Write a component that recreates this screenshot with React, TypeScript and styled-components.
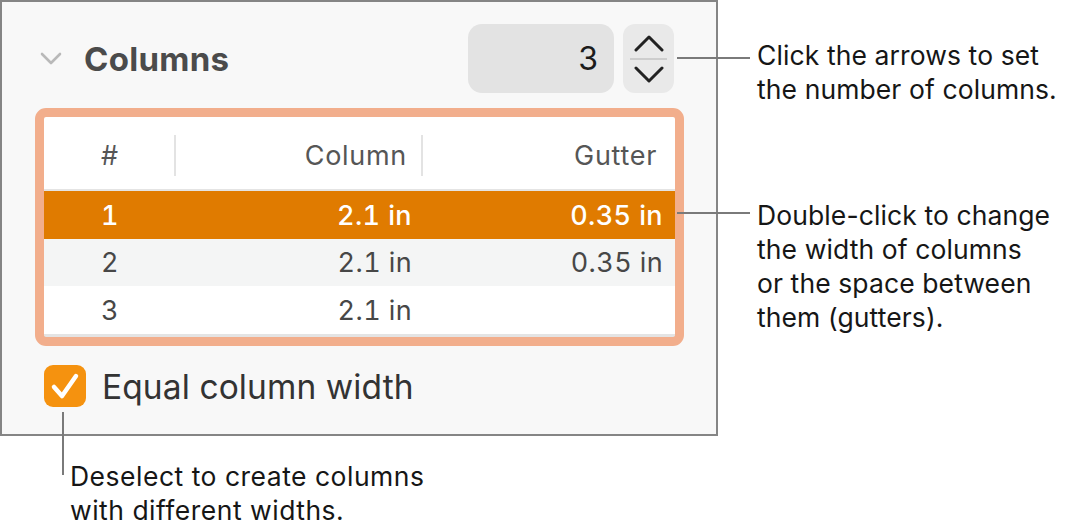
import React from "react";
import styled, { createGlobalStyle } from "styled-components";

const Global = createGlobalStyle`
  html, body { margin: 0; padding: 0; background: #ffffff; }
  body { font-family: "Inter", "Liberation Sans", sans-serif; -webkit-font-smoothing: antialiased; }
`;

const Page = styled.div`
  position: relative;
  width: 1077px;
  height: 529px;
  display: grid;
  grid-template-columns: 718px 1fr;
  grid-template-rows: 436px 1fr;
  background: #ffffff;
  overflow: hidden;
`;

const Panel = styled.section`
  box-sizing: border-box;
  width: 718px;
  height: 436px;
  border: 2px solid #858585;
  background: #f8f8f8;
  padding: 22px 32px 0 33px;
  display: flex;
  flex-direction: column;
`;

const HeaderRow = styled.div`
  display: flex;
  align-items: center;
  height: 69px;
`;

const Disclosure = styled.svg`
  width: 22px;
  height: 13px;
  margin-left: 5px;
  margin-right: 22px;
  flex: none;
`;

const Title = styled.h2`
  margin: 0;
  font-size: 33px;
  font-weight: 700;
  color: #4b4b4b;
  letter-spacing: 0.3px;
  flex: 1;
`;

const NumberField = styled.div`
  box-sizing: border-box;
  width: 146px;
  height: 69px;
  border-radius: 14px;
  background: #e3e3e3;
  display: flex;
  align-items: center;
  justify-content: flex-end;
  padding-right: 16px;
  font-size: 32px;
  color: #1c1c1c;
`;

const Stepper = styled.div`
  width: 51px;
  height: 69px;
  margin-left: 9px;
  margin-right: 10px;
  border-radius: 12px;
  background: #e9e9e9;
  display: flex;
  flex-direction: column;
  align-items: center;
  justify-content: center;
`;

const StepArrow = styled.svg`
  width: 30px;
  height: 18px;
  display: block;
`;

const StepDivider = styled.div`
  width: 37px;
  height: 2px;
  background: #cdcdcd;
  margin: 6px 0;
`;

const Frame = styled.div`
  margin-top: 15px;
  width: 649px;
  box-sizing: border-box;
  border: 9px solid #f2ae8c;
  border-radius: 11px;
  background: #f2ae8c;
`;

const Table = styled.div`
  background: #ffffff;
  border-bottom: 3px solid #e4e4e4;
  border-radius: 2px;
  display: grid;
  grid-template-columns: 132px 247px 1fr;
  font-variant-numeric: tabular-nums;
`;

const HeadCell = styled.div<{ $align: "center" | "right"; $pad: number; $sep?: boolean }>`
  position: relative;
  height: 74px;
  box-sizing: border-box;
  border-bottom: 2px solid #e4e4e4;
  display: flex;
  align-items: center;
  justify-content: ${(p) => (p.$align === "center" ? "center" : "flex-end")};
  padding-right: ${(p) => p.$pad}px;
  padding-top: 4px;
  font-size: 27px;
  letter-spacing: 0.7px;
  color: #565656;
  ${(p) =>
    p.$sep
      ? `&::after { content: ""; position: absolute; right: 0; top: 18px; height: 41px; width: 2px; background: #e3e3e3; }`
      : ""}
`;

const Cell = styled.div<{ $align: "center" | "right"; $pad: number; $tone: "sel" | "alt" | "plain" }>`
  height: ${(p) => (p.$tone === "alt" ? 47 : 48)}px;
  display: flex;
  align-items: center;
  justify-content: ${(p) => (p.$align === "center" ? "center" : "flex-end")};
  padding-right: ${(p) => p.$pad}px;
  font-size: 27px;
  letter-spacing: 0.4px;
  font-weight: ${(p) => (p.$tone === "sel" ? 500 : 400)};
  color: ${(p) => (p.$tone === "sel" ? "#ffffff" : "#474747")};
  background: ${(p) =>
    p.$tone === "sel" ? "#e07b00" : p.$tone === "alt" ? "#f4f5f5" : "#ffffff"};
`;

const CheckRow = styled.label`
  display: flex;
  align-items: center;
  margin-top: 19px;
  margin-left: 9px;
  gap: 16px;
`;

const CheckBox = styled.span`
  width: 42px;
  height: 42px;
  border-radius: 9px;
  background: #f5920f;
  display: flex;
  align-items: center;
  justify-content: center;
  flex: none;
`;

const CheckLabel = styled.span`
  font-size: 33.5px;
  color: #333333;
  letter-spacing: 0.1px;
  padding-top: 2px;
`;

const Notes = styled.div`
  padding-left: 39px;
  padding-top: 38px;
  display: flex;
  flex-direction: column;
  gap: 92px;
`;

const Note = styled.p`
  margin: 0;
  font-size: 26.5px;
  line-height: 34px;
  color: #161616;
  letter-spacing: 0.1px;
`;

const BottomNote = styled(Note)`
  grid-column: 1 / 3;
  margin-top: 23px;
  margin-left: 70px;
  letter-spacing: 0.5px;
`;

const Leader = styled.div<{ $x: number; $y: number; $w: number; $h: number }>`
  position: absolute;
  left: ${(p) => p.$x}px;
  top: ${(p) => p.$y}px;
  width: ${(p) => p.$w}px;
  height: ${(p) => p.$h}px;
  background: #7a7a7a;
`;

type Row = { n: string; col: string; gut: string; tone: "sel" | "alt" | "plain" };
const rows: Row[] = [
  { n: "1", col: "2.1 in", gut: "0.35 in", tone: "sel" },
  { n: "2", col: "2.1 in", gut: "0.35 in", tone: "alt" },
  { n: "3", col: "2.1 in", gut: "", tone: "plain" },
];

export default function App() {
  return (
    <Page>
      <Global />
      <Panel>
        <HeaderRow>
          <Disclosure viewBox="0 0 22 13">
            <path d="M2 2 L11 11 L20 2" fill="none" stroke="#b9b9b9" strokeWidth="2.6" strokeLinecap="round" strokeLinejoin="round" />
          </Disclosure>
          <Title>Columns</Title>
          <NumberField>3</NumberField>
          <Stepper>
            <StepArrow viewBox="0 0 30 18">
              <path d="M2 16 L15 3 L28 16" fill="none" stroke="#222" strokeWidth="3" strokeLinecap="round" strokeLinejoin="round" />
            </StepArrow>
            <StepDivider />
            <StepArrow viewBox="0 0 30 18">
              <path d="M2 2 L15 15 L28 2" fill="none" stroke="#222" strokeWidth="3" strokeLinecap="round" strokeLinejoin="round" />
            </StepArrow>
          </Stepper>
        </HeaderRow>
        <Frame>
          <Table>
            <HeadCell $align="center" $pad={0} $sep>#</HeadCell>
            <HeadCell $align="right" $pad={16} $sep>Column</HeadCell>
            <HeadCell $align="right" $pad={18}>Gutter</HeadCell>
            {rows.map((r) => (
              <React.Fragment key={r.n}>
                <Cell $align="center" $pad={0} $tone={r.tone}>{r.n}</Cell>
                <Cell $align="right" $pad={11} $tone={r.tone}>{r.col}</Cell>
                <Cell $align="right" $pad={12} $tone={r.tone}>{r.gut}</Cell>
              </React.Fragment>
            ))}
          </Table>
        </Frame>
        <CheckRow>
          <CheckBox>
            <svg width="42" height="42" viewBox="0 0 42 42">
              <path d="M10 22 L18 31 L32 11" fill="none" stroke="#fff" strokeWidth="4.5" strokeLinecap="round" strokeLinejoin="round" />
            </svg>
          </CheckBox>
          <CheckLabel>Equal column width</CheckLabel>
        </CheckRow>
      </Panel>
      <Notes>
        <Note>
          Click the arrows to set
          <br />
          the number of columns.
        </Note>
        <Note>
          Double-click to change
          <br />
          the width of columns
          <br />
          or the space between
          <br />
          them (gutters).
        </Note>
      </Notes>
      <BottomNote>
        Deselect to create columns
        <br />
        with different widths.
      </BottomNote>
      <Leader $x={677} $y={57} $w={73} $h={2} />
      <Leader $x={677} $y={212} $w={73} $h={2} />
      <Leader $x={62} $y={412} $w={2} $h={63} />
    </Page>
  );
}
